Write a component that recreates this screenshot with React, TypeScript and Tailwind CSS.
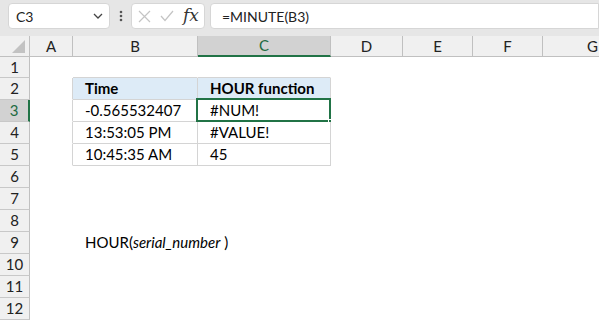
import React from "react";

const FONT = { fontFamily: "Lato, 'Open Sans', sans-serif" };
const widths = [30, 43, 125, 133, 72, 70, 70, 100];
const letters = ["", "A", "B", "C", "D", "E", "F", "G"];
const TB = "#d4d4d4";

type Cell = { text?: React.ReactNode; bold?: boolean; fill?: string; r?: string; b?: string; over?: boolean };

function rowCells(n: number): Cell[] {
  const cells: Cell[] = Array.from({ length: 7 }, () => ({}));
  if (n === 1) {
    cells[1].b = TB;
    cells[2].b = TB;
  }
  if (n >= 2 && n <= 5) {
    cells[0].r = TB;
    cells[1].r = TB;
    cells[1].b = TB;
    cells[2].r = TB;
    cells[2].b = TB;
    cells[1].fill = n === 2 ? "#ddebf7" : undefined;
    cells[2].fill = n === 2 ? "#ddebf7" : undefined;
    cells[1].bold = n === 2;
    cells[2].bold = n === 2;
    const data: Record<number, [string, string]> = {
      2: ["Time", "HOUR function"],
      3: ["-0.565532407", "#NUM!"],
      4: ["13:53:05 PM", "#VALUE!"],
      5: ["10:45:35 AM", "45"],
    };
    cells[1].text = data[n][0];
    cells[2].text = data[n][1];
  }
  if (n === 9) {
    cells[1].over = true;
    cells[1].text = (
      <span className="whitespace-nowrap">
        HOUR(<i>serial_number</i> )
      </span>
    );
  }
  return cells;
}

export default function App() {
  const rows = Array.from({ length: 12 }, (_, i) => i + 1);
  return (
    <div className="w-[599px] h-[320px] overflow-hidden bg-white text-[#1f1f1f]" style={FONT}>
      {/* formula bar */}
      <div className="h-[36px] bg-[#e6e6e6] flex items-start pt-[3px] pl-[8px] gap-0">
        <div className="w-[102px] h-[26px] bg-white rounded-[4px] border border-[#d6d6d6] flex items-center justify-between pl-[7px] pr-[5px]">
          <span className="text-[14px] text-[#222]">C3</span>
          <svg width="12" height="12" viewBox="0 0 12 12">
            <path d="M2 4 L6 8 L10 4" fill="none" stroke="#444" strokeWidth="1.3" />
          </svg>
        </div>
        <div className="w-[21px] h-[26px] flex items-center justify-center">
          <svg width="4" height="12" viewBox="0 0 4 12">
            <circle cx="2" cy="2" r="1.3" fill="#555" />
            <circle cx="2" cy="6" r="1.3" fill="#555" />
            <circle cx="2" cy="10" r="1.3" fill="#555" />
          </svg>
        </div>
        <div className="w-[74px] h-[26px] bg-white rounded-[4px] border border-[#d6d6d6] flex items-center pl-[6px] gap-[9px]">
          <svg width="13" height="13" viewBox="0 0 13 13">
            <path d="M1 1 L12 12 M12 1 L1 12" stroke="#c4c4c4" strokeWidth="1.2" />
          </svg>
          <svg width="14" height="12" viewBox="0 0 14 12">
            <path d="M1 6 L5 10.5 L13 1" fill="none" stroke="#c4c4c4" strokeWidth="1.2" />
          </svg>
          <span className="text-[17px] italic text-[#333] leading-none -mt-[2px]" style={{ fontFamily: "'DejaVu Serif', 'Liberation Serif', serif" }}>
            fx
          </span>
        </div>
        <div className="ml-[5px] flex-1 h-[26px] bg-white rounded-l-[4px] border border-[#d6d6d6] flex items-center pl-[11px]">
          <span className="text-[14px] text-[#222]">=MINUTE(B3)</span>
        </div>
      </div>

      {/* column headers */}
      <div className="flex h-[21px] bg-[#f0f0f0]">
        {letters.map((l, i) => {
          const sel = l === "C";
          return (
            <div
              key={i}
              className={`relative shrink-0 flex items-center justify-center text-[15px] border-r border-[#c0c0c0] ${
                sel ? "bg-[#d2d2d2] text-[#1e6b41] border-b-2 border-b-[#217346]" : "border-b border-b-[#c0c0c0] text-[#222]"
              }`}
              style={{ width: widths[i] }}
            >
              {i === 0 ? (
                <svg className="absolute left-[12px] top-[4px]" width="13" height="13" viewBox="0 0 13 13">
                  <path d="M13 0 L13 13 L0 13 Z" fill="#c2c2c2" />
                </svg>
              ) : (
                l
              )}
            </div>
          );
        })}
      </div>

      {/* body rows */}
      {rows.map((n) => {
        const cells = rowCells(n);
        const sel = n === 3;
        return (
          <div key={n} className="flex" style={{ height: n === 1 ? 21 : 22 }}>
            <div
              className={`shrink-0 w-[30px] flex items-center justify-center text-[15px] border-b border-b-[#c8c8c8] ${
                sel ? "bg-[#d2d2d2] text-[#1e6b41] border-r-2 border-r-[#217346]" : "bg-[#f0f0f0] text-[#222] border-r border-r-[#c0c0c0]"
              }`}
            >
              {n}
            </div>
            {cells.map((c, i) => (
              <div
                key={i}
                className={`relative shrink-0 flex items-center text-[15px] text-black border-r border-b ${i === 1 || i === 2 ? "pl-[12px]" : "pl-[3px]"} ${c.bold ? "font-bold" : ""} ${c.over ? "z-10" : ""}`}
                style={{
                  width: widths[i + 1],
                  borderRightColor: c.r ?? "white",
                  borderBottomColor: c.b ?? "white",
                  background: c.fill ?? "white",
                }}
              >
                {c.text}
                {sel && i === 2 && (
                  <>
                    <div className="absolute left-[-2px] top-[-2px] w-[135px] h-[24px] border-2 border-[#217346]" />
                    <div className="absolute left-[130px] top-[19px] w-[6px] h-[6px] bg-[#217346] border border-white" />
                  </>
                )}
              </div>
            ))}
          </div>
        );
      })}
    </div>
  );
}
